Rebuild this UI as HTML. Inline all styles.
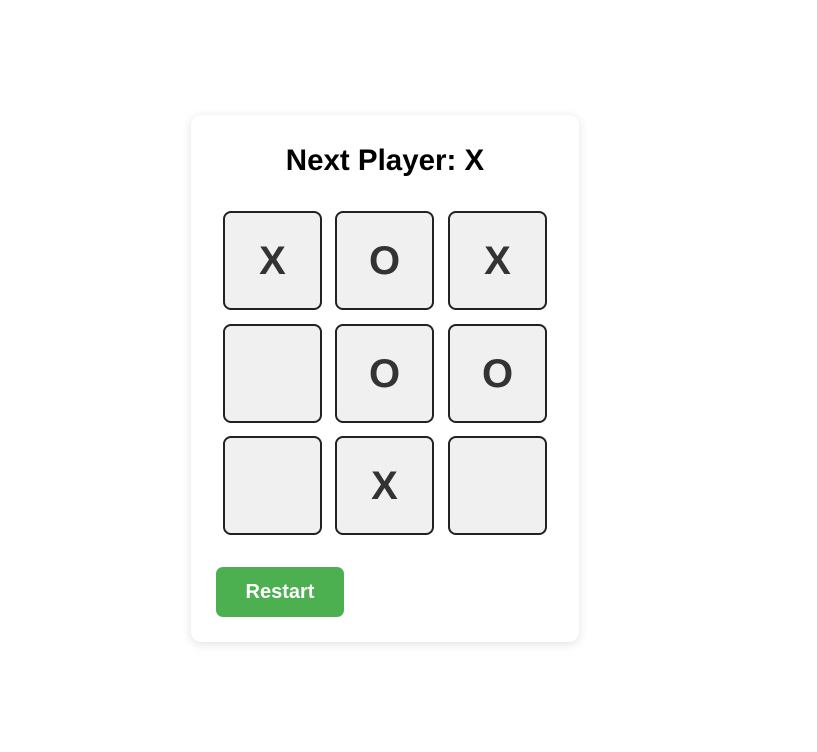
<!DOCTYPE html>
<html><head><style>
html,body{margin:0;padding:0;background:#fff;width:817px;height:752px;overflow:hidden;font-family:"Liberation Sans",sans-serif;}
.card{position:absolute;left:191px;top:115px;width:388px;height:527px;background:#fff;border-radius:10px;box-shadow:0 2px 10px rgba(0,0,0,0.12);}
h1{position:absolute;top:143px;margin:0;text-align:center;font-size:29.5px;font-weight:bold;color:#000;line-height:36px;}
.cell{position:absolute;width:95px;height:95px;border:2px solid #222;border-radius:8px;background:#f0f0f0;display:flex;align-items:center;justify-content:center;font-size:40px;font-weight:bold;color:#333;padding-top:2px;box-sizing:border-box;width:99px;height:99px;}
.btn{position:absolute;left:216px;top:567px;width:128px;height:50px;background:#4caf50;border-radius:7px;color:#fff;font-size:20px;font-weight:bold;display:flex;align-items:center;justify-content:center;}
</style></head><body>
<div class="card"></div>
<h1 style="left:191px;width:388px;">Next Player: X</h1>
<div class="cell" style="left:223px;top:211px">X</div>
<div class="cell" style="left:335px;top:211px">O</div>
<div class="cell" style="left:448px;top:211px">X</div>
<div class="cell" style="left:223px;top:324px"></div>
<div class="cell" style="left:335px;top:324px">O</div>
<div class="cell" style="left:448px;top:324px">O</div>
<div class="cell" style="left:223px;top:436px"></div>
<div class="cell" style="left:335px;top:436px">X</div>
<div class="cell" style="left:448px;top:436px"></div>
<div class="btn">Restart</div>
</body></html>
